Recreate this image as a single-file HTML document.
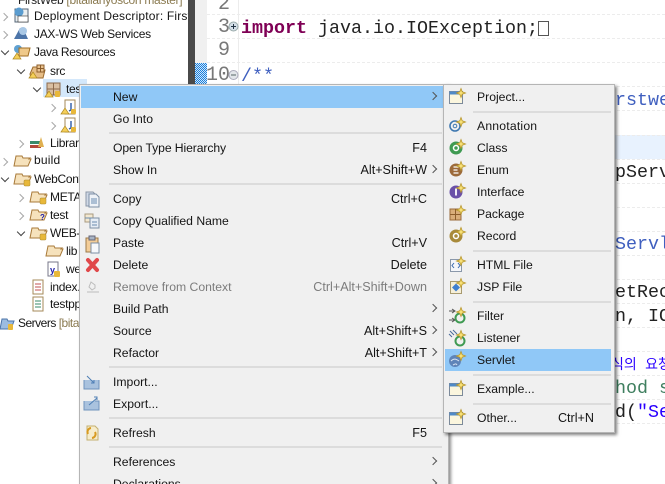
<!DOCTYPE html>
<html><head><meta charset="utf-8">
<style>
html,body{margin:0;padding:0;background:#fff}
#r{position:relative;width:665px;height:484px;overflow:hidden;background:#fff;font-family:"Liberation Sans","Noto Sans CJK KR",sans-serif;font-size:12px;color:#111}
#r div,#r span,#r svg{position:absolute}
.t{white-space:nowrap;line-height:16px;height:16px;font-size:12.2px;color:#151515}
.y{font-size:12px;letter-spacing:-.3px}
.m{left:113px}.s{left:477px}
.k{white-space:nowrap;line-height:16px;height:16px;font-size:12.6px;color:#151515;text-align:right}
.c{font-family:"Liberation Mono",monospace;font-size:18.33px;line-height:24px;height:24px;white-space:pre;color:#222}
.d{left:207px;width:458px;height:0;border-top:1px dashed #ececec}
.n{left:196px;width:34px;text-align:right;font-family:"Liberation Mono",monospace;font-size:20px;line-height:24px;color:#787878}
.sep{height:2px;background:#dcdcdc}
.a{width:5px;height:5px;border-top:1.2px solid #555;border-right:1.2px solid #555;transform:rotate(45deg)}
.tw{width:5px;height:5px;transform:rotate(45deg);border-right:1.6px solid #a8a8a8;border-top:1.6px solid #a8a8a8}
.tw.o{transform:rotate(135deg);border-color:#444}
</style></head><body>
<div id="r">
<!-- tree -->
<div style="left:43px;top:79px;width:44px;height:18px;background:#d4e8fb"></div>
<div class="t y" style="left:18px;top:-8px;color:#222">FirstWeb <span style="position:static;color:#8a7a50">[bitalianyoscon master]</span></div>
<div class="t y" style="left:34px;top:8px;width:154px;overflow:hidden;letter-spacing:.18px">Deployment Descriptor: First</div>
<div class="t y" style="left:34px;top:26px">JAX-WS Web Services</div>
<div class="t y" style="left:34px;top:44px;letter-spacing:-.35px">Java Resources</div>
<div class="t y" style="left:50px;top:63px">src</div>
<div class="t y" style="left:66px;top:81px">test</div>
<div class="t y" style="left:50px;top:135px">Libraries</div>
<div class="t y" style="left:34px;top:152px;letter-spacing:.2px">build</div>
<div class="t y" style="left:34px;top:171px">WebContent</div>
<div class="t y" style="left:50px;top:189px">META-INF</div>
<div class="t y" style="left:50px;top:207px">test</div>
<div class="t y" style="left:50px;top:225px">WEB-INF</div>
<div class="t y" style="left:66px;top:243px">lib</div>
<div class="t y" style="left:66px;top:261px">web.xml</div>
<div class="t y" style="left:50px;top:279px">index.jsp</div>
<div class="t y" style="left:50px;top:296px">testpp.jsp</div>
<div class="t y" style="left:18px;top:315px;letter-spacing:-.5px">Servers <span style="position:static;color:#8a7a50">[bitalianyo]</span></div>
<!-- twisties -->
<div class="tw" style="left:1px;top:14px"></div>
<div class="tw" style="left:1px;top:32px"></div>
<div class="tw o" style="left:2px;top:48px"></div>
<div class="tw o" style="left:18px;top:67px"></div>
<div class="tw o" style="left:34px;top:85px"></div>
<div class="tw" style="left:49px;top:105px"></div>
<div class="tw" style="left:49px;top:123px"></div>
<div class="tw" style="left:17px;top:141px"></div>
<div class="tw" style="left:1px;top:159px"></div>
<div class="tw o" style="left:2px;top:175px"></div>
<div class="tw" style="left:17px;top:195px"></div>
<div class="tw" style="left:17px;top:213px"></div>
<div class="tw o" style="left:18px;top:229px"></div>
<!-- tree icons -->
<svg style="left:0;top:0" width="80" height="335" viewBox="0 0 80 335">
<g>
<rect x="15" y="9" width="13" height="13" fill="#e9eef0" stroke="#567"/><circle cx="19" cy="12" r="4.500" fill="#5a9ccf"/><rect x="18" y="16" width="10" height="6" fill="#fff" stroke="#333" stroke-width=".6"/>
<path d="M14 39l6-11 3 0 5 11z" fill="#4c74a8"/><circle cx="23" cy="31" r="4" fill="#a9c8e6"/>
<circle cx="18" cy="49" r="4" fill="#5fa1d2"/><path d="M19 48h11l-2 8h-9z" fill="#efc98a" stroke="#a06e24"/><path d="M13 59l4-6 4 6z" fill="#f5cf5a" stroke="#b08a20" stroke-width=".7"/>
<path d="M30 74l3-7h11v3h1l-2 8H31z" fill="#e6bd86" stroke="#9c6b2c"/><path d="M37 65h7v7h-7zM40.500 65v7M37 68.500h7" fill="#e9c28e" stroke="#8c5d2c"/><path d="M29 78l4-6 4 6z" fill="#f5cf5a" stroke="#b08a20" stroke-width=".7"/>
<rect x="47" y="83" width="13" height="12" fill="#d9bfa2" stroke="#8c6a4c"/><path d="M53.500 83v12M47 89h13" stroke="#8c6a4c"/><path d="M45 97l4-6 4 6z" fill="#f5cf5a" stroke="#b08a20" stroke-width=".7"/><rect x="55" y="91" width="5" height="6" rx="1" fill="#e8b83a"/>
<path d="M65 100h10v14H65z" fill="#fff" stroke="#a58a5a"/><path d="M71 103v7l-2 1" stroke="#2c5aa8" fill="none" stroke-width="1.400"/><path d="M61 114l4-6 4 6z" fill="#f5cf5a" stroke="#b08a20" stroke-width=".7"/><rect x="71" y="109" width="5" height="5" rx="1" fill="#e8b83a"/>
<path d="M65 118h10v14H65z" fill="#fff" stroke="#a58a5a"/><path d="M71 121v7l-2 1" stroke="#2c5aa8" fill="none" stroke-width="1.400"/><path d="M61 132l4-6 4 6z" fill="#f5cf5a" stroke="#b08a20" stroke-width=".7"/><rect x="71" y="127" width="5" height="5" rx="1" fill="#e8b83a"/>
<rect x="30" y="145" width="11" height="3" fill="#b3483a"/><rect x="30" y="141" width="11" height="3" fill="#3a8a6a"/><path d="M38 147l3-10 3 10z" fill="#e0b050"/>
<path d="M14 166l2-10h6l1 2h7l-1 1h2l-3 7z" fill="#f6e2bc" stroke="#a87a3a"/>
<path d="M14 184l2-10h6l1 2h7l-1 1h2l-3 7z" fill="#f6e2bc" stroke="#a87a3a"/><rect x="24" y="180" width="6" height="6" rx="1" fill="#e8b83a" stroke="#a8862a" stroke-width=".5"/>
<path d="M30 202l2-10h6l1 2h7l-1 1h2l-3 7z" fill="#f6e2bc" stroke="#a87a3a"/><rect x="40" y="198" width="6" height="6" rx="1" fill="#e8b83a" stroke="#a8862a" stroke-width=".5"/>
<path d="M30 220l2-10h6l1 2h7l-1 1h2l-3 7z" fill="#f6e2bc" stroke="#a87a3a"/>
<path d="M30 238l2-10h6l1 2h7l-1 1h2l-3 7z" fill="#f6e2bc" stroke="#a87a3a"/><rect x="40" y="234" width="6" height="6" rx="1" fill="#e8b83a" stroke="#a8862a" stroke-width=".5"/>
<path d="M46 256l2-10h6l1 2h7l-1 1h2l-3 7z" fill="#f6e2bc" stroke="#a87a3a"/>
<path d="M48 262h10v14H48z" fill="#fff" stroke="#778"/><rect x="54" y="271" width="6" height="6" rx="1" fill="#e8b83a"/>
<path d="M33 280h10v14H33z" fill="#fff" stroke="#a58a5a"/><path d="M35 284h6M35 287h6M35 290h6" stroke="#c05050"/>
<path d="M33 297h10v14H33z" fill="#fff" stroke="#a58a5a"/><path d="M35 301h6M35 304h6M35 307h6" stroke="#3a8a6a"/>
<path d="M0 329l2-10h5l1 2h6l-3 8z" fill="#9cbce0" stroke="#4c74a8"/><rect x="8" y="324" width="5" height="6" rx="1" fill="#e8b83a"/>
</g>
<text x="40" y="220" font-size="8" font-weight="bold" fill="#22a" font-family="Liberation Sans">?</text>
<text x="50" y="273" font-size="9" font-weight="bold" fill="#22a" font-family="Liberation Sans">y</text>
</svg>
<!-- sash -->
<div style="left:188px;top:0;width:7px;height:484px;background:#4a4a4a"></div>
<!-- gutter -->
<div style="left:195px;top:0;width:12px;height:484px;background:#f0f0f0"></div>
<div style="left:238px;top:0;width:1px;height:484px;background:#ececec"></div>
<svg style="left:195px;top:63px" width="12" height="21" viewBox="0 0 12 21" shape-rendering="crispEdges"><defs><pattern id="ch" width="2" height="2" patternUnits="userSpaceOnUse"><rect width="2" height="2" fill="#cfe6fa"/><rect width="1" height="1" fill="#1a7fdc"/><rect x="1" y="1" width="1" height="1" fill="#1a7fdc"/></pattern></defs><rect width="12" height="21" fill="url(#ch)"/></svg>
<div style="left:239px;top:135px;width:426px;height:24px;background:#e8f2fe"></div>
<div class="d" style="top:14px"></div><div class="d" style="top:38px"></div><div class="d" style="top:62px"></div><div class="d" style="top:86px"></div><div class="d" style="top:110px"></div><div class="d" style="top:135px"></div><div class="d" style="top:159px"></div><div class="d" style="top:183px"></div><div class="d" style="top:207px"></div><div class="d" style="top:231px"></div><div class="d" style="top:255px"></div><div class="d" style="top:279px"></div><div class="d" style="top:303px"></div><div class="d" style="top:327px"></div><div class="d" style="top:351px"></div><div class="d" style="top:375px"></div><div class="d" style="top:399px"></div><div class="d" style="top:423px"></div>
<div class="n" style="top:-7px">2</div><div class="n" style="top:16px">3</div><div class="n" style="top:39px">9</div><div class="n" style="top:64px">10</div>
<svg style="left:228px;top:20px" width="11" height="60" viewBox="0 0 11 60"><circle cx="5.500" cy="6.500" r="4.500" fill="#d5dfe8" stroke="#9aa"/><path d="M3 6.500h5M5.500 4v5" stroke="#234"/><circle cx="5.500" cy="55" r="4.500" fill="#e2e6ea" stroke="#aab"/><path d="M3 55h5" stroke="#566"/></svg>
<div class="c" style="left:241px;top:17px"><b style="color:#7f0055">import</b> java.io.IOException;</div>
<div style="left:538px;top:21px;width:11px;height:15px;border:1px solid #555;box-sizing:border-box"></div>
<div class="c" style="left:241px;top:65px;color:#3f5fbf">/**</div>
<div class="c" style="left:615px;top:89px;color:#3f5fbf">rstwe</div>
<div class="c" style="left:615px;top:161px">pServ</div>
<div class="c" style="left:615px;top:233px;color:#3f5fbf">Servl</div>
<div class="c" style="left:615px;top:281px">etRec</div>
<div class="c" style="left:615px;top:305px">n, IO</div>
<div class="c" style="left:611px;top:354px;color:#2a00ff;font-family:'Liberation Mono','Noto Sans CJK KR',monospace;font-size:14px">식의 요청</div>
<div class="c" style="left:615px;top:377px;color:#3f7f5f">hod s</div>
<div class="c" style="left:615px;top:401px">d(<span style="position:static;color:#2a00ff">"Se</span></div>

<!-- main menu -->
<div style="left:79px;top:84px;width:370px;height:410px;background:#f0f0f0;border:1px solid #b5b5b5;box-sizing:border-box;box-shadow:2px 2px 3px rgba(0,0,0,.45)"></div>
<div style="left:81px;top:86px;width:362px;height:22px;background:#90c8f7"></div>
<div class="sep" style="left:109px;top:132px;width:333px"></div>
<div class="sep" style="left:109px;top:183px;width:333px"></div>
<div class="sep" style="left:109px;top:366px;width:333px"></div>
<div class="sep" style="left:109px;top:417px;width:333px"></div>
<div class="sep" style="left:109px;top:446px;width:333px"></div>
<div class="t m" style="top:89px">New</div>
<div class="t m" style="top:111px">Go Into</div>
<div class="t m" style="top:140px;letter-spacing:-.1px">Open Type Hierarchy</div>
<div class="t m" style="top:162px">Show In</div>
<div class="t m" style="top:191px">Copy</div>
<div class="t m" style="top:213px">Copy Qualified Name</div>
<div class="t m" style="top:235px">Paste</div>
<div class="t m" style="top:257px">Delete</div>
<div class="t m" style="top:279px;color:#7c7c7c">Remove from Context</div>
<div class="t m" style="top:301px">Build Path</div>
<div class="t m" style="top:323px">Source</div>
<div class="t m" style="top:345px">Refactor</div>
<div class="t m" style="top:374px">Import...</div>
<div class="t m" style="top:396px">Export...</div>
<div class="t m" style="top:425px">Refresh</div>
<div class="t m" style="top:454px">References</div>
<div class="t m" style="top:476px">Declarations</div>
<div class="k" style="right:238px;top:140px">F4</div>
<div class="k" style="right:238px;top:162px">Alt+Shift+W</div>
<div class="k" style="right:238px;top:191px">Ctrl+C</div>
<div class="k" style="right:238px;top:235px">Ctrl+V</div>
<div class="k" style="right:238px;top:257px">Delete</div>
<div class="k" style="right:238px;top:279px;color:#7c7c7c">Ctrl+Alt+Shift+Down</div>
<div class="k" style="right:238px;top:323px">Alt+Shift+S</div>
<div class="k" style="right:238px;top:345px">Alt+Shift+T</div>
<div class="k" style="right:238px;top:425px">F5</div>
<div class="a" style="left:430px;top:93px"></div>
<div class="a" style="left:430px;top:166px"></div>
<div class="a" style="left:430px;top:305px"></div>
<div class="a" style="left:430px;top:327px"></div>
<div class="a" style="left:430px;top:349px"></div>
<div class="a" style="left:430px;top:458px"></div>
<div class="a" style="left:430px;top:480px"></div>
<svg style="left:80px;top:185px" width="28" height="260" viewBox="80 185 28 260">
<path d="M86 192h7l3 3v11h-10z" fill="#d0d9e6" stroke="#8c98a8"/><path d="M89 194h7l3 3v10H89z" fill="#eef2f7" stroke="#7d8fa5"/><path d="M91 199h6M91 201h6M91 203h6" stroke="#6a8cb0"/>
<path d="M85 214h8v8h-8z" fill="#f3e8d0" stroke="#a89a80"/><path d="M90 218h9v10h-9z" fill="#e6edf5" stroke="#7d8fa5"/><path d="M85 218h7M92 222h5M92 225h5" stroke="#6a8cb0"/>
<rect x="86" y="238" width="12" height="14" fill="#f3cd98" stroke="#9c7a4a"/><rect x="89" y="236" width="6" height="4" fill="#a8b4c4" stroke="#667"/><rect x="91" y="243" width="8" height="10" fill="#f6f8fb" stroke="#7d8fa5"/>
<path d="M88 260l9 10M97 260l-9 10" stroke="#e0484a" stroke-width="4" stroke-linecap="round"/>
<path d="M87 292h12M91 282l4 3v3l-3 2-3-3z" fill="none" stroke="#bcbcbc"/>
<path d="M84 380v9h15v-9M84 389h15" fill="#a9c2de" stroke="#6f93bd"/><path d="M87 376l7 7M94 380v3h-3" stroke="#4f7fb5" fill="none"/>
<path d="M84 401v9h15v-9l-4 0M84 410h15" fill="#a9c2de" stroke="#6f93bd"/><path d="M89 405l8-7M94 397h3v3" stroke="#4f7fb5" fill="none"/>
<path d="M87 426h8l3 3v11H87z" fill="#f6eccb" stroke="#c4b070"/><path d="M91 428a4 4 0 0 0-3 6M92 438a4 4 0 0 0 3-6" stroke="#d89a20" stroke-width="2" fill="none"/>
</svg>

<!-- submenu -->
<div style="left:443px;top:84px;width:172px;height:349px;background:#f0f0f0;border:1px solid #b5b5b5;box-sizing:border-box;box-shadow:2px 2px 3px rgba(0,0,0,.5)"></div>
<div style="left:445px;top:349px;width:166px;height:22px;background:#90c8f7"></div>
<div class="sep" style="left:473px;top:111px;width:138px"></div>
<div class="sep" style="left:473px;top:250px;width:138px"></div>
<div class="sep" style="left:473px;top:301px;width:138px"></div>
<div class="sep" style="left:473px;top:374px;width:138px"></div>
<div class="sep" style="left:473px;top:403px;width:138px"></div>
<div class="t s" style="top:89px">Project...</div>
<div class="t s" style="top:118px;letter-spacing:.2px">Annotation</div>
<div class="t s" style="top:140px">Class</div>
<div class="t s" style="top:162px">Enum</div>
<div class="t s" style="top:184px">Interface</div>
<div class="t s" style="top:206px">Package</div>
<div class="t s" style="top:228px">Record</div>
<div class="t s" style="top:257px">HTML File</div>
<div class="t s" style="top:279px">JSP File</div>
<div class="t s" style="top:308px">Filter</div>
<div class="t s" style="top:330px">Listener</div>
<div class="t s" style="top:352px">Servlet</div>
<div class="t s" style="top:381px">Example...</div>
<div class="t s" style="top:410px">Other...</div>
<div class="k" style="right:71px;top:410px">Ctrl+N</div>
<svg style="left:445px;top:86px" width="28" height="342" viewBox="445 86 28 342">
<defs><g id="st"><path d="M0-4.500l1.200 3.300 3.300 1.200-3.300 1.200L0 4.500-1.200 1.200-4.500 0-1.200-1.200z" fill="#f8e27a" stroke="#b8962a" stroke-width=".8"/></g>
<g id="w"><rect x="0" y="0" width="13" height="12" fill="#fbf6de" stroke="#7c8a9a"/><rect x="0" y="0" width="13" height="3" fill="#4f8ac8"/></g></defs>
<use href="#w" x="449.500" y="91.500"/><use href="#st" x="461" y="93"/>
<circle cx="455" cy="126" r="5" fill="none" stroke="#3f78b0" stroke-width="1.600"/><circle cx="455" cy="126" r="1.800" fill="none" stroke="#3f78b0"/><use href="#st" x="461" y="122"/>
<circle cx="456" cy="148" r="6.500" fill="#3f9a52"/><circle cx="456" cy="148" r="2.500" fill="none" stroke="#fff" stroke-width="1.500"/><use href="#st" x="461" y="144"/>
<circle cx="456" cy="170" r="6.500" fill="#9c6a3a"/><path d="M453.500 167h5M453.500 170h4M453.500 173h5" stroke="#fff" stroke-width="1.200"/><use href="#st" x="461" y="166"/>
<circle cx="456" cy="192" r="6.500" fill="#6a50a8"/><path d="M456 188.500v7" stroke="#fff" stroke-width="1.800"/><use href="#st" x="461" y="188"/>
<rect x="450" y="209" width="11" height="11" fill="#d9ad7a" stroke="#9a6a3a"/><path d="M455.500 209v11M450 214.500h11" stroke="#8c5d2c"/><use href="#st" x="461" y="210"/>
<circle cx="456" cy="236" r="6.500" fill="#a88a3a"/><circle cx="456" cy="236" r="2.500" fill="none" stroke="#fff" stroke-width="1.500"/><use href="#st" x="461" y="232"/>
<rect x="450.500" y="259.500" width="11" height="12" fill="#f4f6fa" stroke="#8a98aa"/><path d="M454 263l-2 2.500 2 2.500M458 263l2 2.500-2 2.500" stroke="#3a6ab0" fill="none"/><use href="#st" x="461" y="261"/>
<rect x="450.500" y="281.500" width="11" height="12" fill="#f6efd8" stroke="#a89a70"/><path d="M456 283.500l4 4-4 4-4-4z" fill="#3f7fd0"/><use href="#st" x="461" y="283"/>
<path d="M449 311h6M452 309l3 2-3 2M449 320h6M452 318l3 2-3 2" stroke="#555" fill="none"/><circle cx="460" cy="318" r="4.500" fill="none" stroke="#3f9a52" stroke-width="2"/><use href="#st" x="461" y="312"/>
<path d="M450 331l4 4M453 330l4 4M449 334l3 3" stroke="#4a6a9a"/><circle cx="460" cy="341" r="4.500" fill="none" stroke="#3f9a52" stroke-width="2"/><use href="#st" x="461" y="335"/>
<circle cx="455" cy="361" r="6" fill="#5f84b8"/><path d="M451 361c3-3 5-2 8 0M453 365c2-1 3-2 4 0" stroke="#dbe6f2" fill="none"/><use href="#st" x="461" y="356"/>
<use href="#w" x="449.500" y="383.500"/><use href="#st" x="461" y="385"/>
<use href="#w" x="449.500" y="412.500"/><use href="#st" x="461" y="414"/>
</svg>
</div>
</body></html>
